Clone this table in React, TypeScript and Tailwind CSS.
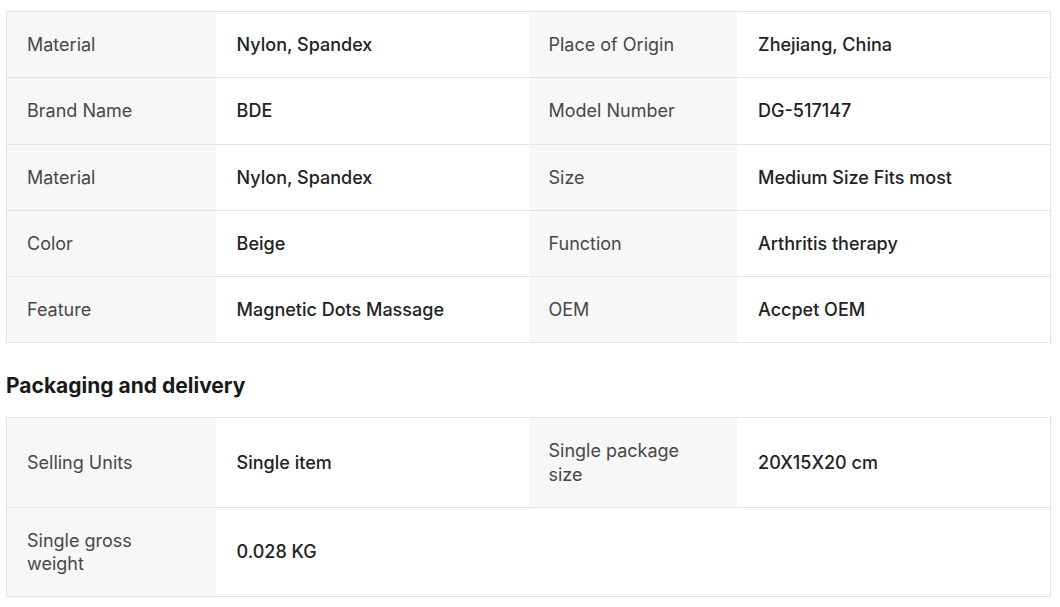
type Cell = { label?: string; value?: string };

const specs: Cell[][] = [
  [
    { label: "Material", value: "Nylon, Spandex" },
    { label: "Place of Origin", value: "Zhejiang, China" },
  ],
  [
    { label: "Brand Name", value: "BDE" },
    { label: "Model Number", value: "DG-517147" },
  ],
  [
    { label: "Material", value: "Nylon, Spandex" },
    { label: "Size", value: "Medium Size Fits most" },
  ],
  [
    { label: "Color", value: "Beige" },
    { label: "Function", value: "Arthritis therapy" },
  ],
  [
    { label: "Feature", value: "Magnetic Dots Massage" },
    { label: "OEM", value: "Accpet OEM" },
  ],
];

const packaging: Cell[][] = [
  [
    { label: "Selling Units", value: "Single item" },
    { label: "Single package size", value: "20X15X20 cm" },
  ],
  [{ label: "Single gross weight", value: "0.028 KG" }, {}],
];

const AttrTable = ({ rows }: { rows: Cell[][] }) => {
  return (
    <div className="border border-[#e3e3e3]">
      {rows.map((row, i) => (
        <div
          key={i}
          className={`grid grid-cols-[2fr_3fr_2fr_3fr] ${
            i > 0 ? "border-t border-[#e3e3e3]" : ""
          }`}
        >
          {row.map((c, j) => (
            <div key={j} className="contents">
              <div
                className={`flex items-center pl-[20px] pr-[30px] py-[21px] leading-[23.25px] text-[#474747] ${
                  c.label ? "bg-[#f7f7f7]" : "bg-white"
                }`}
              >
                {c.label}
              </div>
              <div className="flex items-center pl-[21px] pr-[20px] py-[21px] leading-[23.25px] font-medium text-[#222222]">
                {c.value}
              </div>
            </div>
          ))}
        </div>
      ))}
    </div>
  );
};

export default function App() {
  return (
    <div className="bg-white min-h-[607px] pt-[11px] pl-[6px] pr-[9px] text-[18px] font-['Inter',sans-serif]">
      <AttrTable rows={specs} />
      <h2 className="mt-[29px] mb-[17px] text-[21px] leading-[28px] font-bold text-[#1a1a1a]">
        Packaging and delivery
      </h2>
      <AttrTable rows={packaging} />
    </div>
  );
}
